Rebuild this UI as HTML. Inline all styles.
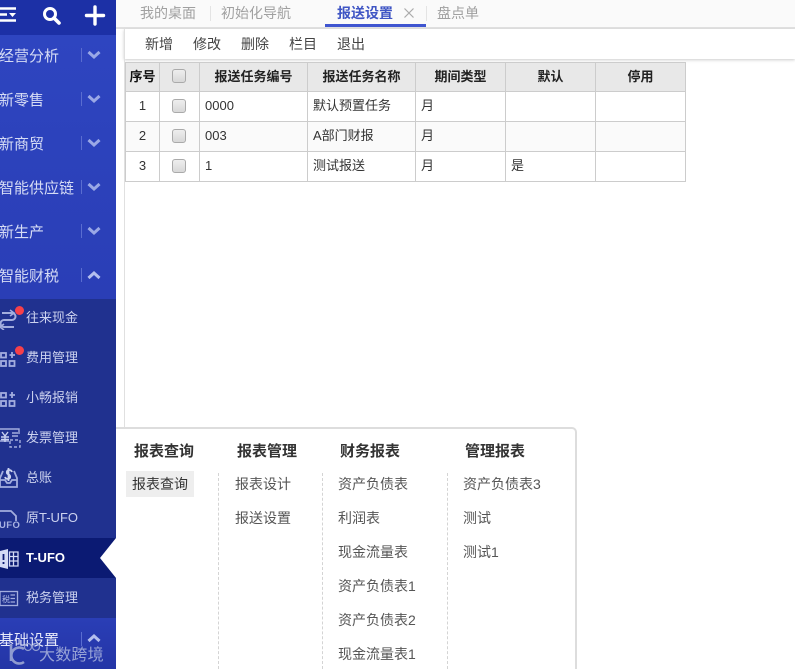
<!DOCTYPE html>
<html lang="zh"><head><meta charset="utf-8">
<style>
html,body{margin:0;padding:0;width:795px;height:669px;overflow:hidden;background:#fff}
body{font-family:"Liberation Sans","Noto Sans CJK SC",sans-serif;font-size:13px;color:#444;position:relative}
.a{position:absolute;white-space:nowrap}
#side{position:absolute;left:0;top:0;width:116px;height:669px;background:#20318f;overflow:hidden}
.m{position:absolute;left:0;width:116px;height:44px;color:#d6dcf5;font-size:15px;line-height:46px;text-indent:-1px}
.m i{position:absolute;left:81px;top:14px;width:1px;height:14px;background:#5a6dd0}
.m svg{position:absolute;left:87px;top:16px}
.s{position:absolute;left:26px;color:#ccd2ef;font-size:13px;line-height:22px}
.ic{position:absolute;left:0}
.dot{position:absolute;left:15px;width:9px;height:9px;border-radius:50%;background:#f6404a}
th,td{border:1px solid #ccc;padding:0;font-weight:normal;box-sizing:border-box}
table{position:absolute;left:125px;top:62px;border-collapse:collapse;table-layout:fixed;width:561px;font-size:13px;color:#333}
th{background:#e8e8e8;height:29px;font-weight:bold;color:#222;padding-bottom:3px}
td{height:30px;padding-left:5px;padding-bottom:4px;background:#fff}
td.n{padding-bottom:2px}
tr.e td{background:#fafafa}
td.c{padding-left:0;text-align:center;padding-bottom:3px}
.cb{display:inline-block;width:12px;height:12px;border:1px solid #aaa;border-radius:3px;background:linear-gradient(#eee,#d8d8d8);vertical-align:middle;position:relative;left:-1px}
.h{position:absolute;font-weight:bold;font-size:15px;color:#333;top:442px;line-height:20px}
.l{position:absolute;font-size:14px;color:#555;line-height:20px}
.d{position:absolute;top:473px;height:196px;border-left:1px dashed #d4d4d4}
</style></head><body>

<div class="a" style="left:0;top:0;width:795px;height:27px;background:#fafafa;border-bottom:2px solid #e0e0e0"></div>
<div class="a" style="left:140px;top:4px;font-size:14px;color:#a0a0a0;line-height:18px">我的桌面</div>
<div class="a" style="left:210px;top:6px;width:1px;height:15px;background:#e4e4e4"></div>
<div class="a" style="left:221px;top:4px;font-size:14px;color:#a0a0a0;line-height:18px">初始化导航</div>
<div class="a" style="left:337px;top:4px;font-size:14px;font-weight:bold;color:#3f55c4;line-height:18px">报送设置</div>
<svg class="a" style="left:404px;top:8px" width="10" height="10"><path d="M0.5 0.5L9.5 9.5M9.5 0.5L0.5 9.5" stroke="#aaa" stroke-width="1.2"/></svg>
<div class="a" style="left:325px;top:24px;width:101px;height:3px;background:#3f55d0"></div>
<div class="a" style="left:426px;top:6px;width:1px;height:15px;background:#e4e4e4"></div>
<div class="a" style="left:437px;top:4px;font-size:14px;color:#a0a0a0;line-height:18px">盘点单</div>

<div class="a" style="left:124px;top:29px;width:671px;height:30px;background:#fff;box-shadow:0 1px 3px #ccc"></div>
<div class="a" style="left:124px;top:29px;width:1px;height:398px;background:#e0e0e0"></div>
<div class="a" style="left:145px;top:35px;font-size:14px;color:#444;line-height:18px">新增</div>
<div class="a" style="left:193px;top:35px;font-size:14px;color:#444;line-height:18px">修改</div>
<div class="a" style="left:241px;top:35px;font-size:14px;color:#444;line-height:18px">删除</div>
<div class="a" style="left:289px;top:35px;font-size:14px;color:#444;line-height:18px">栏目</div>
<div class="a" style="left:337px;top:35px;font-size:14px;color:#444;line-height:18px">退出</div>

<table>
<colgroup><col style="width:34px"><col style="width:40px"><col style="width:108px"><col style="width:108px"><col style="width:90px"><col style="width:90px"><col style="width:90px"></colgroup>
<tr><th style="color:#111">序号</th><th><span class="cb"></span></th><th>报送任务编号</th><th>报送任务名称</th><th>期间类型</th><th>默认</th><th>停用</th></tr>
<tr><td class="c">1</td><td class="c"><span class="cb"></span></td><td class="n">0000</td><td>默认预置任务</td><td>月</td><td></td><td></td></tr>
<tr class="e"><td class="c">2</td><td class="c"><span class="cb"></span></td><td class="n">003</td><td>A部门财报</td><td>月</td><td></td><td></td></tr>
<tr><td class="c">3</td><td class="c"><span class="cb"></span></td><td class="n">1</td><td>测试报送</td><td>月</td><td>是</td><td></td></tr>
</table>

<div class="a" style="left:116px;top:427px;width:459px;height:250px;background:#fff;border:2px solid #ddd;border-left:0;border-radius:0 5px 0 0"></div>
<div class="h" style="left:134px">报表查询</div>
<div class="h" style="left:237px">报表管理</div>
<div class="h" style="left:340px">财务报表</div>
<div class="h" style="left:465px">管理报表</div>
<div class="a" style="left:126px;top:471px;width:68px;height:26px;background:#eee"></div>
<div class="l" style="left:132px;top:474px;color:#333">报表查询</div>
<div class="d" style="left:218px"></div><div class="d" style="left:322px"></div><div class="d" style="left:447px"></div>
<div class="l" style="left:235px;top:474px">报表设计</div>
<div class="l" style="left:235px;top:508px">报送设置</div>
<div class="l" style="left:338px;top:474px">资产负债表</div>
<div class="l" style="left:338px;top:508px">利润表</div>
<div class="l" style="left:338px;top:542px">现金流量表</div>
<div class="l" style="left:338px;top:576px">资产负债表1</div>
<div class="l" style="left:338px;top:610px">资产负债表2</div>
<div class="l" style="left:338px;top:644px">现金流量表1</div>
<div class="l" style="left:463px;top:474px">资产负债表3</div>
<div class="l" style="left:463px;top:508px">测试</div>
<div class="l" style="left:463px;top:542px">测试1</div>

<div id="side">
<div class="a" style="left:0;top:35px;width:116px;height:264px;background:linear-gradient(#2e45c0,#2a3eb6)"></div>
<div class="a" style="left:0;top:0;width:116px;height:35px;background:#1c30a6"></div>
<svg class="a" style="left:0;top:4px" width="116" height="24" fill="none" stroke="#fff">
<path d="M0 4.500H16M0 10.500H7M0 16.500H16" stroke-width="2.400"/><path d="M9 9H16L12.500 13Z" fill="#fff" stroke="none"/>
<circle cx="50" cy="10" r="5.500" stroke-width="3"/><path d="M54 14L59 19" stroke-width="3.600" stroke-linecap="round"/>
<path d="M95 3V20M86.500 11.500H103.500" stroke-width="3.400" stroke-linecap="round"/></svg>

<div class="m" style="top:34px">经营分析<i></i><svg width="14" height="10"><path d="M1.500 2L7 7L12.500 2" fill="none" stroke="#9aa8e6" stroke-width="3"/></svg></div>
<div class="m" style="top:78px">新零售<i></i><svg width="14" height="10"><path d="M1.500 2L7 7L12.500 2" fill="none" stroke="#9aa8e6" stroke-width="3"/></svg></div>
<div class="m" style="top:122px">新商贸<i></i><svg width="14" height="10"><path d="M1.500 2L7 7L12.500 2" fill="none" stroke="#9aa8e6" stroke-width="3"/></svg></div>
<div class="m" style="top:166px">智能供应链<i></i><svg width="14" height="10"><path d="M1.500 2L7 7L12.500 2" fill="none" stroke="#9aa8e6" stroke-width="3"/></svg></div>
<div class="m" style="top:210px">新生产<i></i><svg width="14" height="10"><path d="M1.500 2L7 7L12.500 2" fill="none" stroke="#9aa8e6" stroke-width="3"/></svg></div>
<div class="m" style="top:254px">智能财税<i></i><svg width="14" height="10"><path d="M1.500 8L7 3L12.500 8" fill="none" stroke="#b4bfee" stroke-width="3"/></svg></div>

<div class="a" style="left:0;top:538px;width:116px;height:40px;background:#0b1a73"></div>

<svg class="ic" style="top:308px" width="20" height="22" fill="none" stroke="#a3adde" stroke-width="2"><path d="M2 5H12A3.500 3.500 0 0 1 12 12H4A3.500 3.500 0 0 0 4 19H14"/><path d="M10 2L14 5L10 8" stroke-width="1.600"/><path d="M4 16L0 19L4 22" stroke-width="1.600"/></svg>
<div class="dot" style="top:306px"></div>
<div class="s" style="top:307px">往来现金</div>

<svg class="ic" style="top:350px" width="18" height="18" fill="none" stroke="#a3adde" stroke-width="1.800"><rect x="1" y="3" width="5" height="4.500"/><rect x="1" y="11" width="5" height="5"/><rect x="9.500" y="11" width="5" height="5"/><path d="M12 2V8M9.500 5H15"/></svg>
<div class="dot" style="top:346px"></div>
<div class="s" style="top:347px">费用管理</div>

<svg class="ic" style="top:390px" width="18" height="18" fill="none" stroke="#a3adde" stroke-width="1.800"><rect x="1" y="3" width="5" height="4.500"/><rect x="1" y="11" width="5" height="5"/><rect x="9.500" y="11" width="5" height="5"/><path d="M12 2V8M9.500 5H15"/></svg>
<div class="s" style="top:387px">小畅报销</div>

<svg class="ic" style="top:428px" width="22" height="20" fill="none" stroke="#a3adde" stroke-width="1.400"><path d="M0 1H19V6M9 13H0"/><path d="M2 4L5 8L8 4M1 9H9M1 11.500H9M5 8V14" stroke="#c8d0f0"/><path d="M12 5H18M12 8H18"/><path d="M10 12H20V19H10Z" stroke-dasharray="3 2"/></svg>
<div class="s" style="top:427px">发票管理</div>

<svg class="ic" style="top:467px" width="20" height="22" fill="none" stroke="#a3adde" stroke-width="1.800"><path d="M3 4L0 11V20H17V11L14 4"/><path d="M0 13H5L7 16H10L12 13H17"/><path d="M12 5A3.500 2.500 0 0 0 8.500 3A3 2.500 0 0 0 8.500 7.500A3 2.500 0 0 1 8.500 12A3.500 2.500 0 0 1 5 10M8.500 1V14" stroke="#ccd3f0"/></svg>
<div class="s" style="top:467px">总账</div>

<svg class="ic" style="top:510px" width="20" height="11" fill="none" stroke="#a3adde" stroke-width="1.800"><path d="M0 1H11L16 6V11"/></svg>
<div class="a" style="left:-1px;top:522px;font-size:9.500px;font-weight:bold;color:#a9b3e2;letter-spacing:.4px;line-height:8px">UFO</div>
<div class="s" style="top:507px">原T-UFO</div>

<svg class="ic" style="top:549px" width="20" height="20"><path d="M0 2L8 0V20L0 18Z" fill="#d4daf5"/><path d="M3.500 5V11M3.500 13V15" stroke="#0b1a73" stroke-width="1.800"/><path d="M9.500 3H18V17H9.500ZM9.500 7.500H18M9.500 12H18M13.500 3V17" fill="none" stroke="#d4daf5" stroke-width="1.300"/></svg>
<div class="s" style="top:547px;color:#fff;font-weight:bold">T-UFO</div>

<svg class="ic" style="top:590px" width="20" height="18" fill="none" stroke="#a3adde" stroke-width="1.300"><rect x="0" y="1.500" width="17.500" height="14"/><path d="M10.500 5H15M10.500 8.500H15M10.500 12H15"/><text x="2" y="12" font-size="8" fill="#b8c1ea" stroke="none" font-family="Noto Sans CJK SC, sans-serif">税</text></svg>
<div class="s" style="top:587px">税务管理</div>

<div class="m" style="top:618px;height:51px;background:linear-gradient(#2a3eb6,#2435a6);color:#e8ebfa">基础设置<i></i><svg style="top:15px" width="14" height="10"><path d="M1.500 8L7 3L12.500 8" fill="none" stroke="#b4bfee" stroke-width="3"/></svg></div>

<svg class="a" style="left:8px;top:641px" width="32" height="26" fill="none" stroke="#8f9bd0" stroke-width="1.800"><path d="M3 3V20M16 8A8 8 0 1 0 16 21" stroke-width="2.600"/><circle cx="20" cy="6" r="3.500" stroke-width="1.200"/><circle cx="28" cy="6" r="3.500" stroke-width="1.200"/></svg>
<div class="a" style="left:39px;top:646px;font-size:16px;color:#98a3d6;line-height:20px;letter-spacing:.2px">大数跨境</div>
</div>
<svg class="a" style="left:100px;top:538px" width="16" height="40"><path d="M16 0L0 20L16 40Z" fill="#fff"/></svg>
</body></html>
